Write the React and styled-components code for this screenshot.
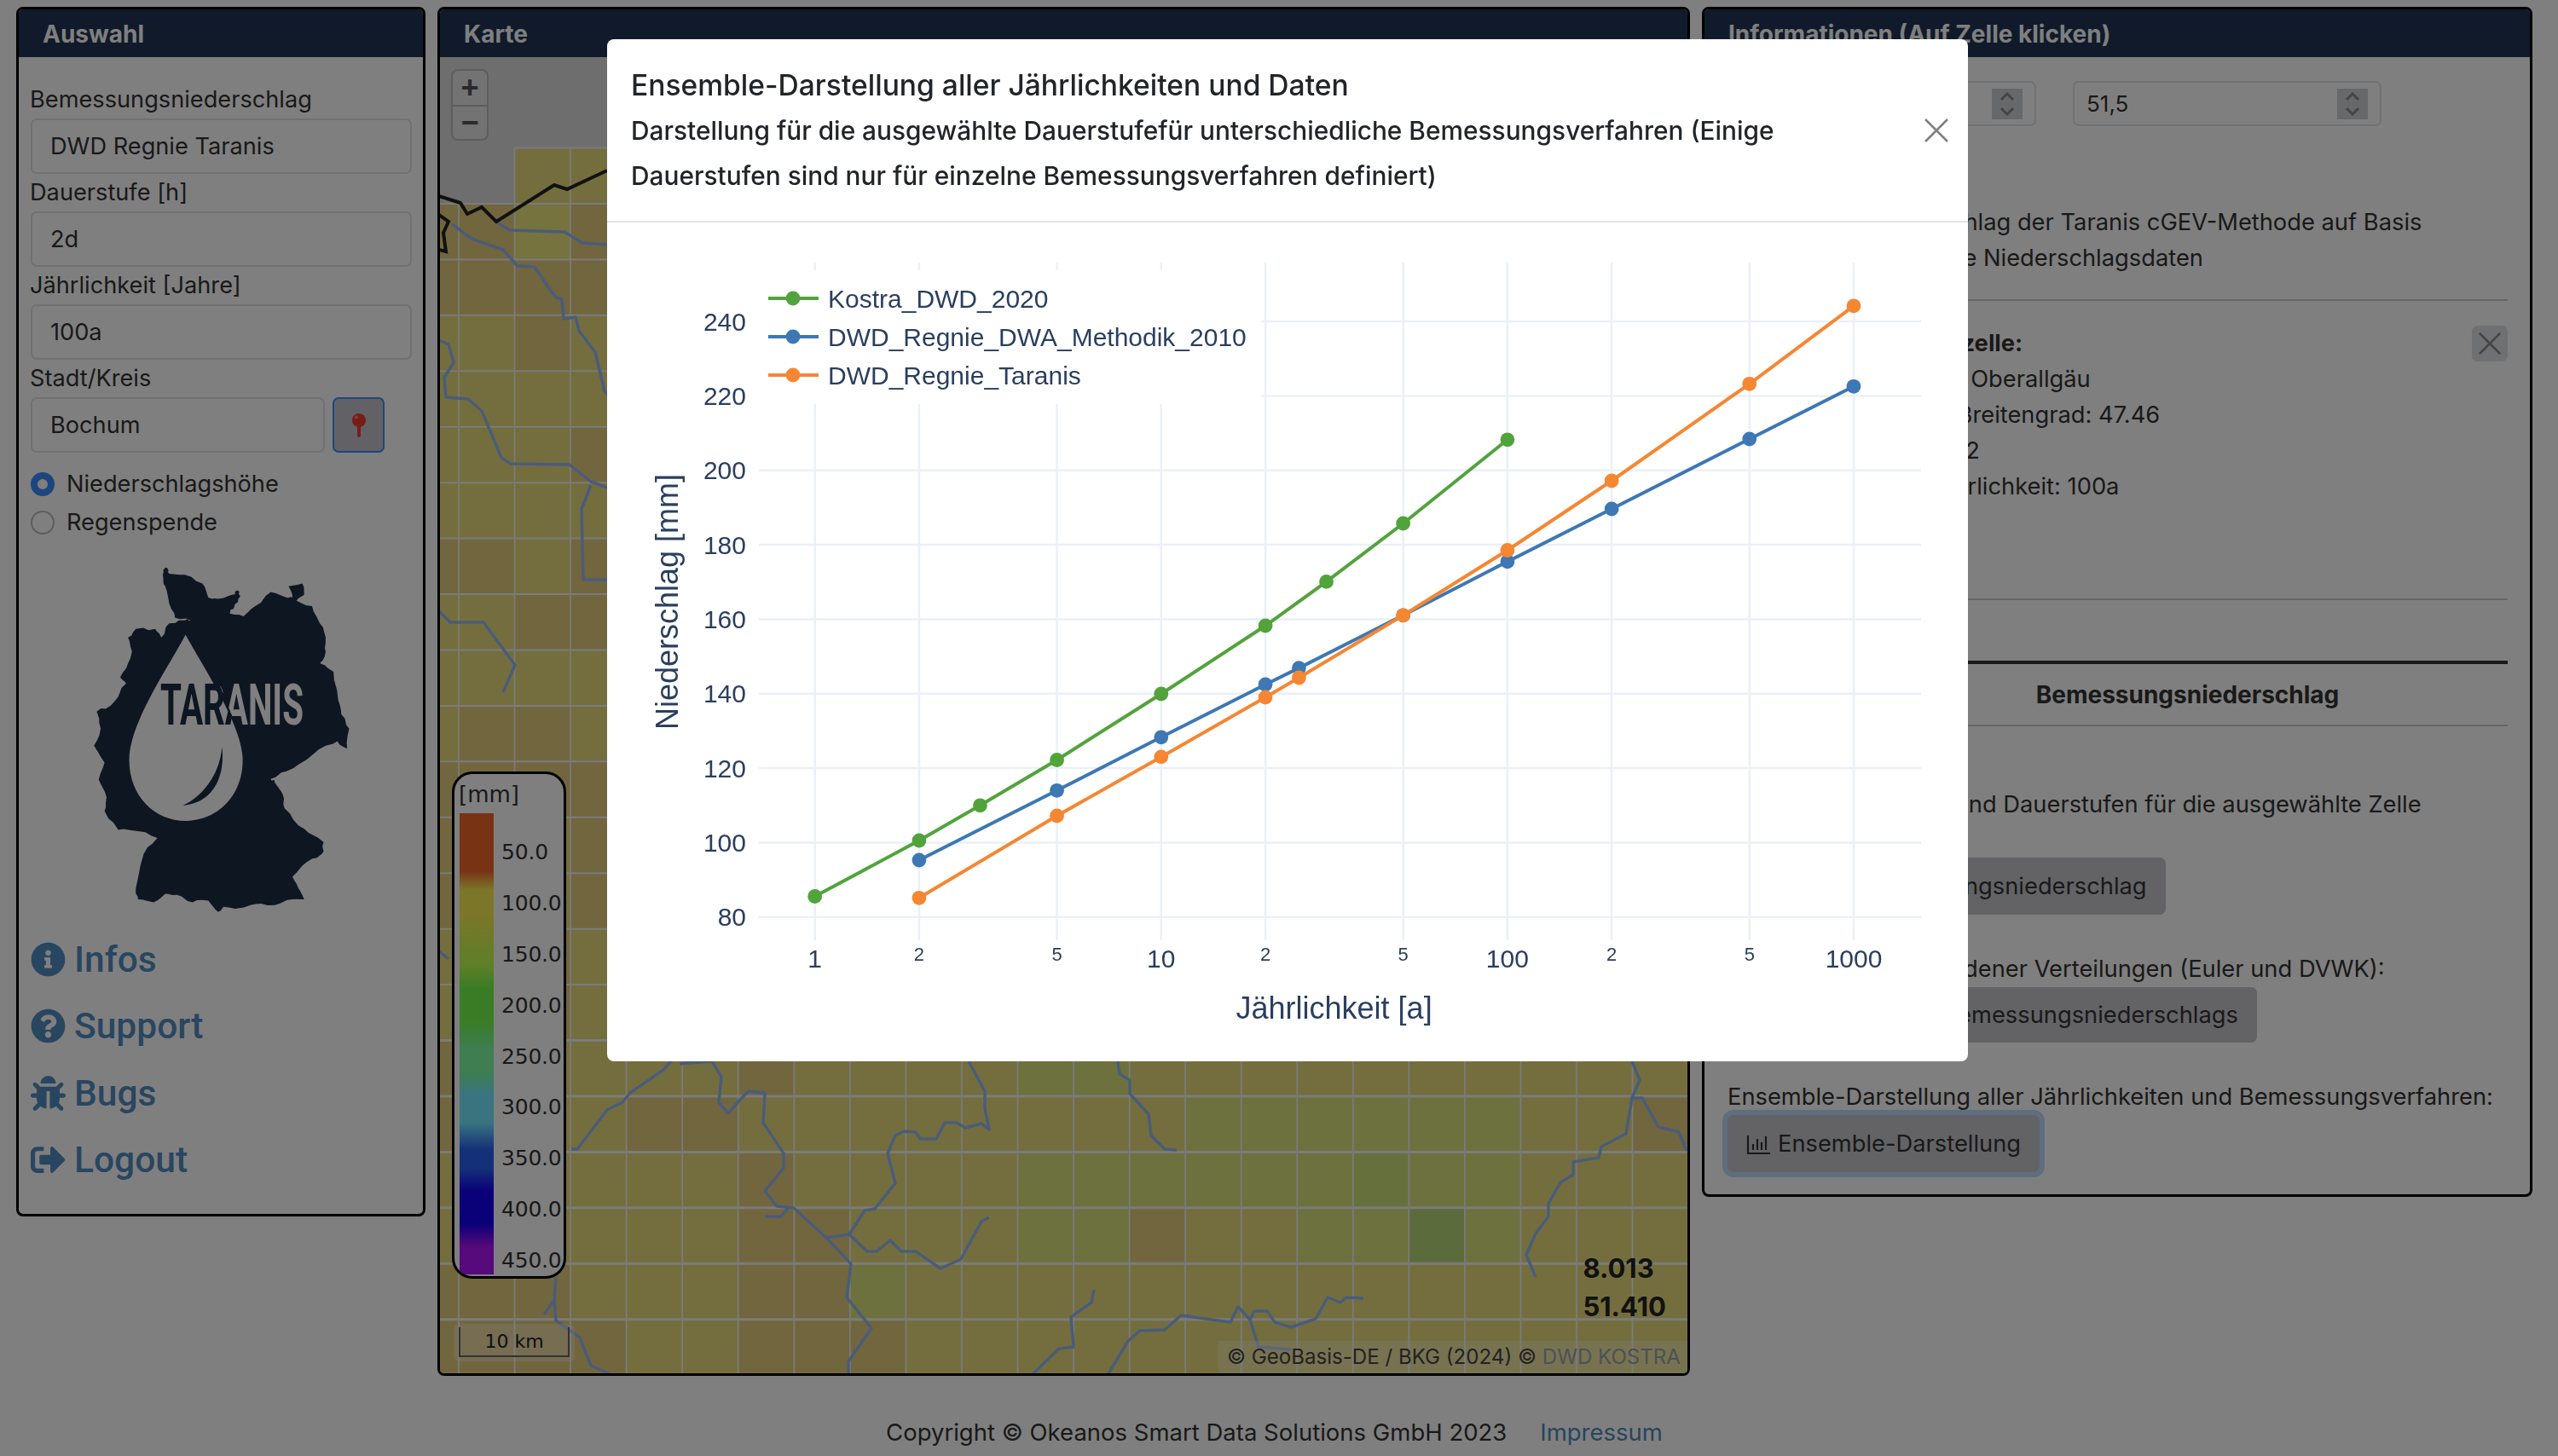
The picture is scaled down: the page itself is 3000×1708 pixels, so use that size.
import React from "react";
import styled, { createGlobalStyle } from "styled-components";
import { FaInfoCircle, FaQuestionCircle, FaBug, FaSignOutAlt } from "react-icons/fa";

const Global = createGlobalStyle`
  html, body { margin: 0; padding: 0; background: #fff; height: 1708px; overflow: hidden; }
  body { font-family: Inter, "Liberation Sans", sans-serif; color: #333; }
  * { box-sizing: border-box; }
`;

const Page = styled.div`
  width: 3000px; height: 1708px; padding: 8px 30px 0 19px;
  display: flex; flex-direction: column;
`;
const Columns = styled.div`display: flex; align-items: flex-start; gap: 14px;`;
const Panel = styled.section`
  width: ${p => p.$w}px; ${p => p.$h ? `height: ${p.$h}px;` : ""}
  border: 3px solid #000; border-radius: 8px; overflow: hidden; background: #fff;
  display: flex; flex-direction: column; flex: none;
`;
const PanelHead = styled.header`
  height: 56px; flex: none; background: #203454; color: #fff; padding: 0 0 0 28px;
  font-size: 28px; font-weight: 700; line-height: 58px;
`;
const LeftBody = styled.div`padding: 28px 13px 28px 14px;`;
const FieldLabel = styled.div`font-size: 27.2px; line-height: 44px; height: 44px; white-space: nowrap; margin-left: -1px;`;
const Field = styled.div`
  height: 65px; border: 2px solid #dee2e6; border-radius: 7px; padding: 0 21px;
  font-size: 27.2px; line-height: 61px; white-space: nowrap;
  ${p => p.$w ? `width: ${p.$w}px; flex: none;` : ""}
`;
const FieldRow = styled.div`display: flex; gap: 9px;`;
const PinButton = styled.div`
  width: 61px; height: 65px; border: 2px solid #3c8cff; border-radius: 7px; background: #c4c4cc;
  display: flex; align-items: center; justify-content: center;
`;
const Radios = styled.div`margin-top: 14px;`;
const RadioRow = styled.div`display: flex; align-items: center; gap: 14px; height: 45px; font-size: 27.2px;`;
const Radio = styled.span`
  width: 28px; height: 28px; border-radius: 50%; flex: none;
  border: ${p => p.$on ? "8px solid #3a8cff" : "2px solid #bbb"}; background: #fff;
`;
const LogoWrap = styled.div`display: flex; justify-content: center; margin-top: 31px;`;
const Nav = styled.nav`margin-top: 15px; display: flex; flex-direction: column;`;
const NavItem = styled.a`
  height: 78.5px; display: flex; align-items: center; gap: 10px; color: #528cc0;
  font-family: Roboto, sans-serif; font-size: 42.5px; font-weight: 500;
  svg { width: 41px; height: 41px; flex: none; }
`;

const MapBody = styled.div`position: relative; height: 1544px; background: #ddd; overflow: hidden;
  > svg { display: block; }`;
const ZoomBox = styled.div`
  position: absolute; left: 15px; top: 16px; width: 40px; border-radius: 6px; overflow: hidden;
  box-shadow: 0 0 0 2px #bbb; background: #e6e6e6;
`;
const ZoomBtn = styled.div`
  height: 40px; display: flex; align-items: center; justify-content: center;
  font: 700 36px/1 "Liberation Sans", sans-serif; color: #555;
  & + & { border-top: 2px solid #bbb; }
`;
const LegendBox = styled.div`
  position: absolute; left: 14px; top: 838px; width: 134px; height: 595px;
  background: #fff; border: 3px solid #000; border-radius: 24px;
  font-family: "DejaVu Sans", sans-serif; color: #333; overflow: hidden;
  padding: 3px 0 0 6px;
`;
const LegendUnit = styled.div`font-size: 26px; line-height: 43px; height: 43px; margin-left: -1px;`;
const LegendScale = styled.div`display: flex; gap: 9px;`;
const LegendBar = styled.div`
  width: 40px; height: 541px; flex: none;
  background: linear-gradient(to bottom, #f0662a 0, #f0662a 12.5%, #f8ec52 16.6%, #f8ec52 22%, #bcff50 33%, #74f84c 38%, #74f84c 45%, #7cfca0 51%, #7cfca0 56%, #74eaff 61%, #74eaff 67%, #2860f0 73%, #2860f0 77%, #1400f0 82%, #1400f0 89%, #ac14f8 94%, #ac14f8 100%);
`;
const LegendTicks = styled.div`display: flex; flex-direction: column; padding-top: 21px;`;
const LegendTick = styled.div`font-size: 25px; height: 59.9px; line-height: 50px; white-space: nowrap; letter-spacing: -.2px;`;
const ScaleBar = styled.div`
  position: absolute; left: 16px; top: 1486px; width: 142px; height: 44px; border-radius: 6px;
  background: rgba(255,255,255,.3); padding: 4px 6px 5px;
`;
const ScaleInner = styled.div`
  height: 100%; border: 2px solid #666; border-top: 0; text-align: center;
  font: 22px/34px "DejaVu Sans", sans-serif; color: #222;
`;
const Coords = styled.div`
  position: absolute; right: 25px; top: 1398px; text-align: left; color: #222;
  font-size: 31px; font-weight: 700; line-height: 45px;
`;
const Attribution = styled.div`
  position: absolute; right: 0; bottom: 0; height: 38px; padding: 0 8px 0 10px;
  background: rgba(255,255,255,.3); font-size: 24.1px; line-height: 38px; color: #444; white-space: nowrap;
  span { color: #98a2ac; }
`;

const RightBody = styled.div`padding: 28px 26px 26px 27px;`;
const SpinRow = styled.div`display: flex; gap: 43px;`;
const SpinField = styled.div`
  width: 362px; height: 53px; border: 2px solid #dee2e6; border-radius: 7px; padding: 0 14px;
  display: flex; align-items: center; justify-content: space-between; font-size: 26px;
`;
const SpinBox = styled.div`
  width: 36px; height: 36px; background: #ccd0d4; display: flex; align-items: center; justify-content: center;
`;
const Para = styled.p`margin: ${p => p.$m || 0}px 0 0; font-size: 27.3px; line-height: 42px; white-space: pre;`;
const Rule = styled.hr`
  margin: ${p => p.$m || 0}px 0 0; border: 0; height: ${p => p.$t || 2}px; background: ${p => p.$c || "#ccc"};
`;
const CellInfo = styled.div`display: flex; justify-content: space-between; align-items: flex-start; margin-top: 29px;`;
const CloseBox = styled.div`
  width: 42px; height: 42px; background: #dde0e2; border-radius: 7px; display: flex; align-items: center; justify-content: center;
`;
const TabTitle = styled.div`
  font-size: 28px; font-weight: 700; line-height: 42px; padding: 15px 0 14px 164px; text-align: center;
`;
const ActionButton = styled.div`
  display: inline-flex; align-items: center; gap: 9px; height: ${p => p.$h || 67}px; padding: 0 22px;
  background: #c6c6cc; border-radius: 7px; font-size: 27.3px; white-space: nowrap;
  margin-top: ${p => p.$m || 0}px;
  ${p => p.$focus ? "box-shadow: 0 0 0 6px #bcdcff;" : ""}
`;
const Footer = styled.footer`
  display: flex; justify-content: center; gap: 39px; padding: 48px 0 0 0; font-size: 27.5px; line-height: 36px; white-space: nowrap;
  a { color: #4f8abf; }
`;

const Backdrop = styled.div`
  position: fixed; inset: 0; background: rgba(0,0,0,.5); display: flex; justify-content: center; padding: 46px 0 0 20px;
`;
const Modal = styled.div`
  width: 1596px; height: 1199px; background: #fff; border-radius: 8px; overflow: hidden;
  display: flex; flex-direction: column;
`;
const ModalHead = styled.div`
  height: 215px; flex: none; border-bottom: 2px solid #dee2e6; padding: 32px 22px 0 28px;
  display: flex; justify-content: space-between; align-items: center; color: #212529;
`;
const ModalTitles = styled.div`align-self: flex-start;`;
const ModalTitle = styled.h5`margin: 0; font-size: 33.6px; font-weight: 500; line-height: 44px; white-space: nowrap;`;
const ModalSub = styled.div`font-size: 29.85px; font-weight: 500; line-height: 52.5px; white-space: pre; margin-top: 5px;`;
const ModalClose = styled.div`display: flex; margin-top: -32px;`;
const ChartWrap = styled.div`flex: 1; svg { display: block; }`;

const rows = ["--oo","bbyb","bbbb","oobo","oooo","ooob","oooo","bbob","oobb","oooo","obbo","bbbb","bbob","bbob","oobo","oobo",
  "boooooboooogg",
  "booobboooooooogggggg" + "oob",
  "ooooooboooo" + "gggggg" + "G" + "gg" + "oooo",
  "oooooobbooo" + "ggb" + "oo" + "gg" + "D" + "g" + "oooo",
  "bbbooobbg",
  "bbbboobbb"];
const cellColor = { b: "#e4cc7e", o: "#e8dc7c", y: "#ece67e", g: "#dae27c", G: "#cce07a", D: "#b6d676" };
const rivers = [
  "582,260 598,270 662,272 683,285 712,287",
  "530,263 553,280 590,293 607,312 627,313 645,340 652,349 659,351 661,374 675,372 679,388 698,413 709,459 720,470",
  "515,399 526,404 532,425 521,443 523,466 549,468 565,482 588,537 599,544 668,545 693,565 712,572",
  "693,569 682,597 684,680 693,680 712,680",
  "515,717 528,730 567,730 604,780 590,812",
  "515,1116 526,1125",
  "670,1348 677,1348 712,1302 730,1293 739,1282 778,1255 787,1245",
  "652,1499 650,1525 638,1542", "650,1525 652,1549 680,1569 693,1602 716,1612",
  "797,1248 835,1245 846,1263 843,1293 854,1306 868,1290 878,1280 897,1282 895,1317 919,1353 919,1370 907,1385 897,1397 911,1415 931,1417 969,1452 993,1477 998,1483 993,1522 1022,1558 995,1597 995,1613",
  "897,1427 916,1427 926,1415",
  "969,1452 996,1448 1014,1420 1026,1418 1050,1388 1041,1353 1050,1332 1060,1327 1074,1328 1079,1336 1098,1336 1108,1317 1122,1317 1132,1323 1151,1318 1160,1325 1155,1300 1155,1280 1136,1245",
  "996,1448 1017,1468 1028,1468 1044,1455 1057,1468 1074,1468 1103,1488 1127,1477 1151,1433 1160,1428",
  "1311,1245 1313,1260 1325,1267 1325,1283 1347,1307 1350,1332 1366,1348 1380,1349",
  "1283,1513 1280,1528 1256,1545 1259,1580 1242,1582 1210,1613",
  "1599,1523 1579,1522 1572,1528 1557,1522 1543,1547 1514,1557 1495,1551 1486,1538 1471,1538 1466,1548 1452,1533 1443,1551 1385,1543 1366,1560 1337,1561 1323,1573 1299,1613",
  "1466,1548 1476,1580 1514,1583",
  "1914,1245 1923,1267 1914,1288 1926,1288 1945,1322 1969,1328 1978,1350",
  "1914,1288 1907,1330 1878,1345 1875,1358 1845,1363 1845,1378 1830,1387 1816,1412 1816,1427 1801,1447 1790,1472 1801,1498",
];
const borders = ["515,230 540,238 548,251 565,243 582,260 650,217 665,222 712,200", "515,252 526,260 520,273 523,295 515,293"];

function MapDrawing() {
  const cells = [], lines = [];
  rows.forEach((row, r) => {
    const y = 173.5 + 65.44 * r;
    for (let c = -1; c < 23; c++) {
      const ch = row[c + 1] || "o";
      if (ch === "-") continue;
      cells.push(<rect key={r + "_" + c} x={538 + 65.55 * c} y={y} width={66} height={66} fill={cellColor[ch]} />);
    }
    lines.push(<line key={"h" + r} x1={r === 0 ? 603 : 516} x2="1980" y1={y} y2={y} strokeWidth={r >= 16 ? 3 : 2} />);
  });
  for (let c = 0; c < 23; c++) {
    const x = 538 + 65.55 * c;
    lines.push(<line key={"v" + c} x1={x} x2={x} y1={c < 1 ? 239 : 173.5} y2="1611" strokeWidth="1.7" />);
  }
  return (
    <svg width="1464" height="1544" viewBox="516 67 1464 1544">
      {cells}
      <g stroke="#f6f6f6">{lines}</g>
      <g fill="none" stroke="#95b9f5" strokeWidth="3.5" strokeLinejoin="round">
        {rivers.map((p, i) => <polyline key={i} points={p} />)}
      </g>
      <g fill="none" stroke="#222" strokeWidth="4">
        {borders.map((p, i) => <polyline key={i} points={p} />)}
      </g>
    </svg>
  );
}

const outline = [[415,10],[425,8],[430,18],[470,20],[515,35],[530,60],[555,62],[590,55],[605,47],[612,58],[598,72],[585,88],[620,93],[650,75],[690,50],[730,60],[745,60],[735,40],[770,35],[775,55],[755,65],[795,75],[815,105],[830,130],[830,155],[815,175],[850,190],[862,240],[870,265],[890,290],[885,325],[860,312],[830,320],[780,345],[730,365],[690,378],[700,385],[720,405],[725,430],[760,460],[800,478],[825,490],[820,510],[780,525],[745,550],[760,570],[775,590],[745,590],[700,600],[650,598],[610,605],[570,603],[555,612],[530,592],[490,595],[450,582],[420,580],[390,595],[350,590],[345,570],[365,510],[400,482],[350,470],[300,468],[265,435],[270,410],[250,380],[265,350],[238,320],[255,290],[245,260],[280,250],[305,225],[320,210],[305,200],[325,175],[335,155],[325,130],[345,115],[395,115],[410,130],[430,105],[470,100],[485,100],[445,95],[430,70],[420,40],[415,25]];
function jagged(pts) {
  let seed = 7, out = [];
  const rnd = () => { seed = (seed * 16807) % 2147483647; return seed / 2147483647 - 0.5; };
  pts.forEach((p, i) => {
    const q = pts[(i + 1) % pts.length];
    out.push(p);
    for (let k = 1; k < 3; k++) {
      const t = k / 3;
      out.push([p[0] + (q[0] - p[0]) * t + rnd() * 6, p[1] + (q[1] - p[1]) * t + rnd() * 5]);
    }
  });
  return out.map(p => p[0].toFixed(1) + "," + p[1].toFixed(1)).join(" ");
}

function Logo() {
  return (
    <svg width="300" height="405" viewBox="109 665 300 405">
      <defs>
        <linearGradient id="tarFill" gradientUnits="userSpaceOnUse" x1="264" y1="824" x2="266" y2="823.2">
          <stop offset=".5" stopColor="#1c2c44" /><stop offset=".5" stopColor="#fff" />
        </linearGradient>
      </defs>
      <g transform="translate(0,660) scale(.459,.668)">
        <polygon points={jagged(outline)} fill="#1c2c44" />
        <path fill="#fff" d="M472 125C430 180 328 280 328 345C328 410 395 452 472 452C550 452 618 410 618 345C618 285 515 180 472 125Z" />
        <path fill="#1c2c44" d="M565 322C575 380 535 422 465 425C515 410 560 370 565 322Z" />
      </g>
      <text x="187" y="849" fontFamily="Roboto, sans-serif" fontWeight="700" fontSize="67" textLength="168" lengthAdjust="spacingAndGlyphs" fill="url(#tarFill)">TARANIS</text>
    </svg>
  );
}

const X = v => 955.7 + 406.1 * Math.log10(v);
const xVals = [1,2,5,10,20,50,100,200,500,1000];
const yVals = [240,220,200,180,160,140,120,100,80];
const Y = v => 1075.8 - (v - 80) * 4.367;
const series = [
  { name: "Kostra_DWD_2020", color: "#52a33c", pts: [[1,1051.5],[2,986],[3,944.8],[5,891.5],[10,814],[20,734],[30,682.4],[50,614],[100,515.8]] },
  { name: "DWD_Regnie_DWA_Methodik_2010", color: "#3d78b5", pts: [[2,1009],[5,927.3],[10,864.8],[20,803],[25,783.6],[50,721.8],[100,658.8],[200,597],[500,515],[1000,453.3]] },
  { name: "DWD_Regnie_Taranis", color: "#f58733", pts: [[2,1053.3],[5,957],[10,887.9],[20,818],[25,795],[50,721.8],[100,645.5],[200,564],[500,450.3],[1000,358.8]] },
];

function Chart() {
  const minor = v => [2,5,20,50,200,500].includes(v);
  return (
    <svg width="1596" height="984" viewBox="712 261 1596 984" fontFamily="'Liberation Sans', sans-serif" fill="#2a3f5f">
      <g stroke="#ebf0f8" strokeWidth="2.5">
        {xVals.map(v => <line key={v} x1={X(v)} x2={X(v)} y1="308" y2="1103" />)}
        {yVals.map(v => <line key={v} x1="890" x2="2253" y1={Y(v)} y2={Y(v)} />)}
      </g>
      <rect x="890" y="317" width="589" height="157" fill="#fff" />
      {series.map(s => (
        <g key={s.name}>
          <polyline fill="none" stroke={s.color} strokeWidth="4" points={s.pts.map(p => `${X(p[0])},${p[1]}`).join(" ")} />
          {s.pts.map(p => <circle key={p[0]} cx={X(p[0])} cy={p[1]} r="8.4" fill={s.color} />)}
        </g>
      ))}
      {yVals.map(v => <text key={v} x="875" y={Y(v) + 10.5} textAnchor="end" fontSize="30">{v}</text>)}
      {xVals.map(v => minor(v)
        ? <text key={v} x={X(v)} y="1127" textAnchor="middle" fontSize="22">{String(v)[0]}</text>
        : <text key={v} x={X(v)} y="1135" textAnchor="middle" fontSize="30">{v}</text>)}
      <text x="1564.6" y="1195" textAnchor="middle" fontSize="36">Jährlichkeit [a]</text>
      <text transform="translate(795,706) rotate(-90)" textAnchor="middle" fontSize="36">Niederschlag [mm]</text>
      {series.map((s, i) => (
        <g key={s.name} transform={`translate(0,${350 + 45 * i})`}>
          <line x1="901" x2="960" y1="0" y2="0" stroke={s.color} strokeWidth="4" />
          <circle cx="930" cy="0" r="8.4" fill={s.color} />
          <text x="971" y="10.5" fontSize="30">{s.name}</text>
        </g>
      ))}
    </svg>
  );
}

const Cross = ({ size, color, w }) => (
  <svg width={size} height={size} viewBox="0 0 30 30" fill="none" stroke={color} strokeWidth={w}><path d="M2 2L28 28M28 2L2 28" /></svg>
);
const Chevrons = () => (
  <svg width="24" height="32" viewBox="0 0 24 32" fill="none" stroke="#888" strokeWidth="3"><path d="M5 11L12 4L19 11M5 21L12 28L19 21" /></svg>
);
const BarsIcon = () => (
  <svg width="28" height="28" viewBox="0 0 28 28" fill="none" stroke="#333" strokeWidth="2.2"><path d="M2 4V25H28M8 21V14M13 21V8M18 21V12M23 21V5" /></svg>
);
const Pin = () => (
  <svg width="16" height="28" viewBox="0 0 16 28"><rect x="6" y="14" width="4" height="14" rx="2" fill="#f03a2c" /><circle cx="8" cy="8" r="8" fill="#f03a2c" /><circle cx="5" cy="4.5" r="2" fill="#f58a80" /></svg>
);

const legendTicks = ["50.0","100.0","150.0","200.0","250.0","300.0","350.0","400.0","450.0"];

export default function App() {
  return (
    <>
      <Global />
      <Page>
        <Columns>
          <Panel $w={480} $h={1419}>
            <PanelHead>Auswahl</PanelHead>
            <LeftBody>
              <FieldLabel>Bemessungsniederschlag</FieldLabel>
              <Field>DWD Regnie Taranis</Field>
              <FieldLabel>Dauerstufe [h]</FieldLabel>
              <Field>2d</Field>
              <FieldLabel>Jährlichkeit [Jahre]</FieldLabel>
              <Field>100a</Field>
              <FieldLabel>Stadt/Kreis</FieldLabel>
              <FieldRow>
                <Field $w={345}>Bochum</Field>
                <PinButton><Pin /></PinButton>
              </FieldRow>
              <Radios>
                <RadioRow><Radio $on />Niederschlagshöhe</RadioRow>
                <RadioRow><Radio />Regenspende</RadioRow>
              </Radios>
              <LogoWrap><Logo /></LogoWrap>
              <Nav>
                <NavItem><FaInfoCircle />Infos</NavItem>
                <NavItem><FaQuestionCircle />Support</NavItem>
                <NavItem><FaBug />Bugs</NavItem>
                <NavItem><FaSignOutAlt />Logout</NavItem>
              </Nav>
            </LeftBody>
          </Panel>
          <Panel $w={1469} $h={1606}>
            <PanelHead>Karte</PanelHead>
            <MapBody>
              <MapDrawing />
              <ZoomBox><ZoomBtn>+</ZoomBtn><ZoomBtn>−</ZoomBtn></ZoomBox>
              <LegendBox>
                <LegendUnit>[mm]</LegendUnit>
                <LegendScale>
                  <LegendBar />
                  <LegendTicks>{legendTicks.map(t => <LegendTick key={t}>{t}</LegendTick>)}</LegendTicks>
                </LegendScale>
              </LegendBox>
              <ScaleBar><ScaleInner>10 km</ScaleInner></ScaleBar>
              <Coords>8.013<br />51.410</Coords>
              <Attribution>© GeoBasis-DE / BKG (2024) © <span>DWD KOSTRA</span></Attribution>
            </MapBody>
          </Panel>
          <Panel $w={974}>
            <PanelHead>Informationen (Auf Zelle klicken)</PanelHead>
            <RightBody>
              <SpinRow>
                <SpinField>10,5<SpinBox><Chevrons /></SpinBox></SpinField>
                <SpinField>51,5<SpinBox><Chevrons /></SpinBox></SpinField>
              </SpinRow>
              <Para $m={92}>{"Bemessungsniederschlag der Taranis cGEV-Methode auf Basis\nder deutschlandsweite Niederschlagsdaten"}</Para>
              <Rule $m={27} />
              <CellInfo>
                <Para>
                  <b>Ausgewählte  Rasterzelle:</b>{"\nStadt- und Landkreis: Oberallgäu\nLängengrad: 10.28,   Breitengrad: 47.46\nZell-Nummer ID: 18742\nDauerstufe [h] 2d Jährlichkeit: 100a"}
                </Para>
                <CloseBox><Cross size={28} color="#888" w={3} /></CloseBox>
              </CellInfo>
              <Rule $m={110} />
              <Rule $m={71} $t={4} $c="#333" />
              <TabTitle>Bemessungsniederschlag</TabTitle>
              <Rule />
              <Para $m={71}>Alle    Jährlichkeiten und Dauerstufen für die ausgewählte Zelle</Para>
              <ActionButton $m={41}><BarsIcon />Tabelle Bemessungsniederschlag</ActionButton>
              <Para $m={43}>Vergleich zu verschiedener Verteilungen (Euler und DVWK):</Para>
              <ActionButton $h={65}><BarsIcon />Verteilung des Bemessungsniederschlags</ActionButton>
              <Para $m={43}>Ensemble-Darstellung aller Jährlichkeiten und Bemessungsverfahren:</Para>
              <ActionButton $focus><BarsIcon />Ensemble-Darstellung</ActionButton>
            </RightBody>
          </Panel>
        </Columns>
        <Footer>
          <span>Copyright © Okeanos Smart Data Solutions GmbH 2023</span>
          <a>Impressum</a>
        </Footer>
      </Page>
      <Backdrop>
        <Modal>
          <ModalHead>
            <ModalTitles>
              <ModalTitle>Ensemble-Darstellung aller Jährlichkeiten und Daten</ModalTitle>
              <ModalSub>{"Darstellung für die ausgewählte Dauerstufefür unterschiedliche Bemessungsverfahren (Einige\nDauerstufen sind nur für einzelne Bemessungsverfahren definiert)"}</ModalSub>
            </ModalTitles>
            <ModalClose><Cross size={30} color="#808080" w={2.6} /></ModalClose>
          </ModalHead>
          <ChartWrap><Chart /></ChartWrap>
        </Modal>
      </Backdrop>
    </>
  );
}
